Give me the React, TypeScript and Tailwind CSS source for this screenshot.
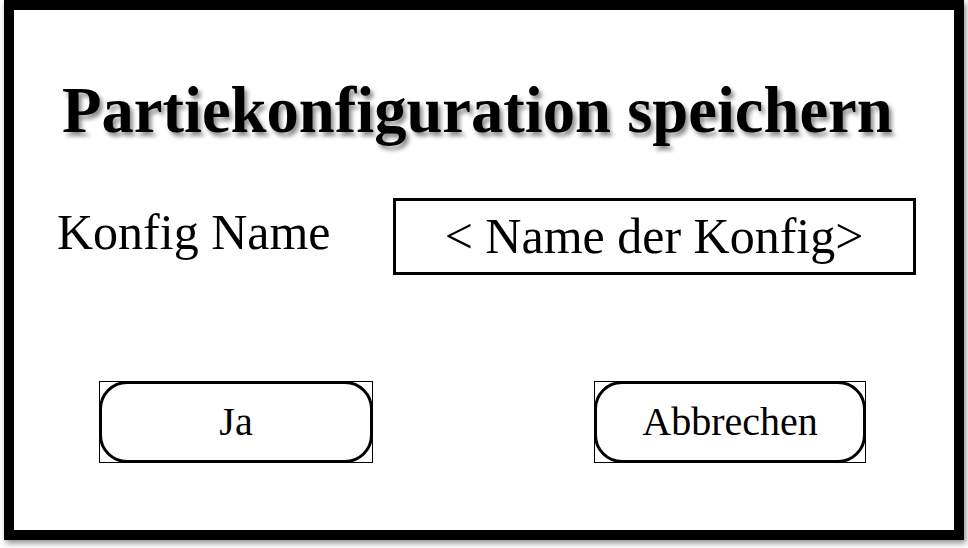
export default function App() {
  return (
    <div className="w-[968px] h-[548px] bg-white font-['Liberation_Serif','Times_New_Roman',serif] text-black">
      <div className="ml-[4px] w-[960px] h-[540px] border-[10px] border-black bg-white shadow-[2px_3px_6px_rgba(0,0,0,0.45)] flex flex-col">
        <h1 className="mt-[68px] pl-[48px] text-[64.6px] leading-none font-bold whitespace-nowrap [text-shadow:3px_4px_4px_rgba(0,0,0,0.45)]">
          Partiekonfiguration speichern
        </h1>

        <div className="mt-[55px] flex items-start">
          <span className="ml-[43px] mt-[9px] text-[50px] leading-none whitespace-nowrap">Konfig Name</span>
          <div className="ml-[62px] w-[523px] h-[77px] border-[3px] border-black flex items-center justify-center">
            <span className="text-[50px] leading-none whitespace-nowrap">&lt; Name der Konfig&gt;</span>
          </div>
        </div>

        <div className="mt-[106px] flex items-start">
          <div className="ml-[85px] relative w-[274px] h-[82px]">
            <button className="w-full h-full rounded-[28px] border-[3px] border-black bg-white text-[40px] leading-none flex items-center justify-center">
              Ja
            </button>
            <div className="absolute inset-0 border border-black pointer-events-none" />
          </div>
          <div className="ml-[221px] relative w-[272px] h-[82px]">
            <button className="w-full h-full rounded-[28px] border-[3px] border-black bg-white text-[40px] leading-none flex items-center justify-center">
              Abbrechen
            </button>
            <div className="absolute inset-0 border border-black pointer-events-none" />
          </div>
        </div>
      </div>
    </div>
  );
}
